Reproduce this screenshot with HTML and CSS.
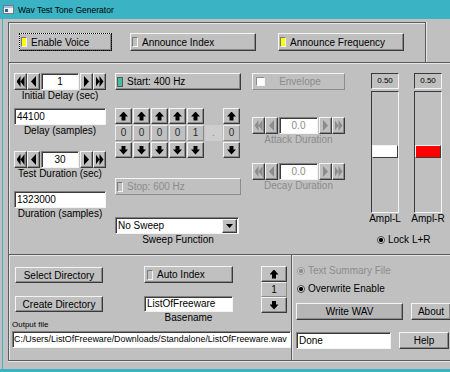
FILE: index.html
```html
<!DOCTYPE html>
<html>
  <head>
    <meta charset="UTF-8" />
    <title>Wav Test Tone Generator</title>
    <link rel="stylesheet" href="styles.css">
  </head>
  <body>
    <div class="window">
      <div class="titlebar">
        <svg class="app-icon" viewBox="0 0 11 9"><rect x="0.5" y="0.5" width="10" height="8" fill="#f2f2f2" stroke="#7a7a7a"/><rect x="1" y="1" width="9" height="2" fill="#a9c0dc"/><rect x="2" y="4" width="3" height="3" fill="#2d5fa8"/></svg>
        <span>Wav Test Tone Generator</span>
      </div>

      <div class="client">
        <!-- voice options -->
        <div class="voice-strip">
          <div class="voice-frame">
            <button class="btn lead focus voice-btn"><i class="led yellow"></i>Enable Voice</button>
            <button class="btn lead announce-btn index-btn"><i class="led"></i>Announce Index</button>
            <button class="btn lead announce-btn freq-btn"><i class="led yellow"></i>Announce Frequency</button>
          </div>
        </div>

        <div class="main-frame">
          <!-- delays and durations -->
          <div class="col col-delay">
            <div class="spin">
              <button class="btn sbtn"><i class="ar first"></i></button>
              <button class="btn sbtn"><i class="ar prev"></i></button>
              <div class="entry center">1</div>
              <button class="btn sbtn"><i class="ar next"></i></button>
              <button class="btn sbtn"><i class="ar last"></i></button>
            </div>
            <div class="cap">Initial Delay (sec)</div>
            <div class="entry delay-samples">44100</div>
            <div class="cap">Delay (samples)</div>
            <div class="spin test-dur">
              <button class="btn sbtn"><i class="ar first"></i></button>
              <button class="btn sbtn"><i class="ar prev"></i></button>
              <div class="entry center">30</div>
              <button class="btn sbtn"><i class="ar next"></i></button>
              <button class="btn sbtn"><i class="ar last"></i></button>
            </div>
            <div class="cap">Test Duration (sec)</div>
            <div class="entry dur-samples">1323000</div>
            <div class="cap">Duration (samples)</div>
          </div>

          <!-- frequency -->
          <div class="col col-freq">
            <button class="btn lead"><i class="led green"></i>Start: 400 Hz</button>
            <div class="digits">
              <button class="btn dbtn"><i class="ar up"></i></button>
              <button class="btn dbtn"><i class="ar up"></i></button>
              <button class="btn dbtn"><i class="ar up"></i></button>
              <button class="btn dbtn"><i class="ar up"></i></button>
              <button class="btn dbtn"><i class="ar up"></i></button>
              <div></div>
              <button class="btn dbtn"><i class="ar up"></i></button>

              <div class="dval">0</div>
              <div class="dval">0</div>
              <div class="dval">0</div>
              <div class="dval">0</div>
              <div class="dval">1</div>
              <div class="dval dot">.</div>
              <div class="dval">0</div>

              <button class="btn dbtn"><i class="ar down"></i></button>
              <button class="btn dbtn"><i class="ar down"></i></button>
              <button class="btn dbtn"><i class="ar down"></i></button>
              <button class="btn dbtn"><i class="ar down"></i></button>
              <button class="btn dbtn"><i class="ar down"></i></button>
              <div></div>
              <button class="btn dbtn"><i class="ar down"></i></button>
            </div>
            <button class="btn lead dim stop-btn"><i class="led"></i>Stop: 600 Hz</button>
            <div class="combo">
              <span class="combo-text">No Sweep</span>
              <button class="btn combo-btn"><i class="ar drop"></i></button>
            </div>
            <div class="cap">Sweep Function</div>
          </div>

          <!-- envelope -->
          <div class="col col-env">
            <button class="btn dim env-btn"><i class="check"></i><span class="env-text">Envelope</span></button>
            <div class="spin dim attack">
              <button class="btn sbtn"><i class="ar first"></i></button>
              <button class="btn sbtn"><i class="ar prev"></i></button>
              <div class="entry center">0.0</div>
              <button class="btn sbtn"><i class="ar next"></i></button>
              <button class="btn sbtn"><i class="ar last"></i></button>
            </div>
            <div class="cap dim">Attack Duration</div>
            <div class="spin dim decay">
              <button class="btn sbtn"><i class="ar first"></i></button>
              <button class="btn sbtn"><i class="ar prev"></i></button>
              <div class="entry center">0.0</div>
              <button class="btn sbtn"><i class="ar next"></i></button>
              <button class="btn sbtn"><i class="ar last"></i></button>
            </div>
            <div class="cap dim">Decay Duration</div>
          </div>

          <!-- amplitude sliders -->
          <div class="col col-ampl">
            <div class="sliders">
              <div class="slider">
                <div class="val">0.50</div>
                <div class="trough"><div class="handle"></div></div>
                <div class="cap">Ampl-L</div>
              </div>
              <div class="slider">
                <div class="val">0.50</div>
                <div class="trough"><div class="handle red"></div></div>
                <div class="cap">Ampl-R</div>
              </div>
            </div>
            <div class="opt lock"><i class="radio"></i>Lock L+R</div>
          </div>
        </div>

        <div class="bottom-row">
          <!-- output file -->
          <div class="file-frame">
            <div class="file-top">
              <div class="dir-col">
                <button class="btn">Select Directory</button>
                <button class="btn create-btn">Create Directory</button>
                <div class="small-label">Output file</div>
              </div>
              <div class="base-col">
                <button class="btn lead auto-btn"><i class="led"></i>Auto Index</button>
                <div class="entry base-entry">ListOfFreeware</div>
                <div class="cap">Basename</div>
              </div>
              <div class="index-col">
                <button class="btn ibtn"><i class="ar up"></i></button>
                <div class="ival">1</div>
                <button class="btn ibtn"><i class="ar down"></i></button>
              </div>
            </div>
            <div class="entry path">C:/Users/ListOfFreeware/Downloads/Standalone/ListOfFreeware.wav</div>
          </div>

          <!-- write -->
          <div class="write-frame">
            <div class="opt dim"><i class="radio"></i>Text Summary File</div>
            <div class="opt overwrite"><i class="radio"></i>Overwrite Enable</div>
            <div class="write-row">
              <button class="btn write-btn">Write WAV</button>
              <button class="btn about-btn">About</button>
            </div>
            <div class="write-row status-row">
              <div class="entry status">Done</div>
              <button class="btn help-btn">Help</button>
            </div>
          </div>
        </div>
      </div>
      <div class="edge"></div>
    </div>
  </body>
</html>
```

FILE: styles.css
```css
* {
    box-sizing: border-box;
}

body {
    margin: 0;
    font-family: "Liberation Sans", Arial, sans-serif;
    font-size: 10px;
    color: #000;
}

.window {
    width: 450px;
    height: 372px;
    overflow: hidden;
    background: #c0c0c0;
}

.titlebar {
    height: 19px;
    background: #3ab3c4;
    display: flex;
    align-items: center;
    padding-left: 3px;
    font-size: 8.5px;
}

.app-icon {
    width: 11px;
    height: 9px;
    margin-right: 4px;
}

.client {
    margin-left: 2px;
    border-left: 1px solid #3ab3c4;
    height: 350px;
}

.edge {
    height: 3px;
    background: #3ab3c4;
}

/* generic widgets */
.btn {
    font: inherit;
    color: #000;
    background: #c0c0c0;
    height: 17px;
    padding: 0 1px;
    margin: 0;
    border: 1px solid;
    border-color: #f4f4f4 #3a3a3a #3a3a3a #f4f4f4;
    box-shadow: inset -1px -1px #8a8a8a;
    display: flex;
    align-items: center;
    justify-content: center;
    flex: none;
    white-space: nowrap;
}

.btn.lead {
    justify-content: flex-start;
}

.btn.dim {
    color: #8c8c8c;
    border-color: #f4f4f4 #8c8c8c #8c8c8c #f4f4f4;
    box-shadow: none;
}

.focus {
    outline: 1px dotted #000;
    outline-offset: -1px;
}

.led {
    width: 6px;
    height: 10px;
    margin-right: 4px;
    border: 1px solid;
    border-color: #7a7a7a #f4f4f4 #f4f4f4 #7a7a7a;
    flex: none;
}

.led.yellow {
    background: #ffff00;
}

.led.green {
    background: #3cbf9c;
    border-color: #5a5a5a;
}

.entry {
    height: 17px;
    background: #fff;
    border: 1px solid;
    border-color: #808080 #f4f4f4 #f4f4f4 #808080;
    box-shadow: inset 1px 1px #3a3a3a;
    padding-left: 2px;
    line-height: 15px;
    white-space: nowrap;
    overflow: hidden;
}

.entry.center {
    text-align: center;
    padding-left: 0;
}

.cap {
    line-height: 12px;
    text-align: center;
    white-space: nowrap;
}

.dim .entry,
.cap.dim {
    color: #8c8c8c;
}

/* arrow glyphs */
.ar {
    display: block;
    background: #000;
}

.dim .ar {
    background: #8c8c8c;
}

.ar.up {
    width: 9px;
    height: 9px;
    clip-path: polygon(50% 0, 100% 55%, 72% 55%, 72% 100%, 28% 100%, 28% 55%, 0 55%);
}

.ar.down {
    width: 9px;
    height: 9px;
    clip-path: polygon(28% 0, 72% 0, 72% 45%, 100% 45%, 50% 100%, 0 45%, 28% 45%);
}

.ar.first {
    width: 8px;
    height: 11px;
    clip-path: polygon(0 50%, 50% 0, 50% 50%, 100% 0, 100% 100%, 50% 50%, 50% 100%);
}

.ar.prev {
    width: 5px;
    height: 11px;
    clip-path: polygon(0 50%, 100% 0, 100% 100%);
}

.ar.next {
    width: 5px;
    height: 11px;
    clip-path: polygon(0 0, 100% 50%, 0 100%);
}

.ar.last {
    width: 8px;
    height: 11px;
    clip-path: polygon(0 0, 50% 50%, 50% 0, 100% 50%, 50% 100%, 50% 50%, 0 100%);
}

.ar.drop {
    width: 7px;
    height: 4px;
    clip-path: polygon(0 0, 100% 0, 50% 100%);
}

/* top voice frame */
.voice-strip {
    height: 43px;
    display: flex;
}

.voice-frame {
    margin: 3px 0 0 5px;
    width: 418px;
    height: 40px;
    border: 1px solid #5c5c5c;
    border-bottom: none;
    box-shadow: inset 1px 1px #e6e6e6, 1px 0 #e6e6e6;
    padding: 10px 0 0 10px;
    display: flex;
}

.voice-frame .btn {
    height: 18px;
}

.voice-btn {
    width: 93px;
}

.announce-btn {
    width: 126px;
}

.index-btn {
    margin-left: 18px;
}

.freq-btn {
    margin-left: 22px;
}

/* main frame */
.main-frame {
    margin-left: 5px;
    height: 192px;
    border-top: 1px solid #5c5c5c;
    border-left: 1px solid #5c5c5c;
    box-shadow: inset 1px 1px #e6e6e6;
    padding: 10px 0 0 5px;
    display: flex;
    align-items: flex-start;
}

.col {
    display: flex;
    flex-direction: column;
}

.col-delay {
    width: 92px;
}

.spin {
    display: flex;
    height: 17px;
}

.sbtn {
    width: 13px;
    padding: 0;
}

.spin .entry {
    width: 38px;
    margin: 0 1px;
}

.delay-samples {
    margin-top: 6px;
}

.test-dur {
    margin-top: 14px;
}

.dur-samples {
    margin-top: 11px;
}

.col-freq {
    width: 126px;
    margin-left: 9px;
}

.digits {
    margin-top: 18px;
    display: grid;
    grid-template-columns: repeat(7, 17px);
    grid-template-rows: repeat(3, 16px);
    gap: 1px;
}

.dbtn {
    width: 17px;
    height: 16px;
    padding: 0;
}

.dval {
    border: 1px solid;
    border-color: #ececec #8a8a8a #8a8a8a #ececec;
    text-align: center;
    line-height: 14px;
    color: #2a2a2a;
}

.dval.dot {
    border: none;
    background: #cdcdcd;
    color: #8c8c8c;
    line-height: 16px;
}

.stop-btn {
    margin-top: 20px;
}

.combo {
    margin-top: 22px;
    height: 17px;
    width: 124px;
    display: flex;
    background: #fff;
    border: 1px solid;
    border-color: #808080 #f4f4f4 #f4f4f4 #808080;
    box-shadow: inset 1px 1px #3a3a3a;
    padding: 1px 1px 0 1px;
}

.combo-text {
    flex: 1;
    line-height: 14px;
    padding-left: 1px;
}

.combo-btn {
    width: 15px;
    height: 14px;
    padding: 0;
}

.col-env {
    width: 93px;
    margin-left: 11px;
}

.env-btn {
    justify-content: flex-start;
    padding-left: 3px;
}

.check {
    width: 9px;
    height: 9px;
    background: #fff;
    border: 1px solid;
    border-color: #8c8c8c #f4f4f4 #f4f4f4 #8c8c8c;
    flex: none;
}

.env-text {
    flex: 1;
    text-align: center;
    padding-right: 8px;
}

.spin.attack {
    margin-top: 27px;
}

.spin.decay {
    margin-top: 17px;
}

.col-env .spin .entry {
    width: 39px;
}

.col-ampl {
    width: 71px;
    margin-left: 26px;
}

.sliders {
    display: flex;
    gap: 15px;
}

.slider {
    width: 28px;
    display: flex;
    flex-direction: column;
    align-items: center;
}

.val {
    width: 28px;
    height: 16px;
    border: 1px solid;
    border-color: #3a3a3a #f4f4f4 #f4f4f4 #3a3a3a;
    font-size: 8px;
    line-height: 14px;
    text-align: center;
}

.trough {
    margin-top: 2px;
    width: 28px;
    height: 122px;
    border: 1px solid;
    border-color: #3a3a3a #f4f4f4 #f4f4f4 #3a3a3a;
}

.handle {
    margin-top: 53px;
    height: 13px;
    background: #fff;
    border: 1px solid;
    border-color: #f4f4f4 #3a3a3a #3a3a3a #f4f4f4;
}

.handle.red {
    background: #ff0000;
}

.opt {
    display: flex;
    align-items: center;
    line-height: 12px;
    white-space: nowrap;
}

.radio {
    width: 8px;
    height: 8px;
    margin-right: 3px;
    border-radius: 50%;
    border: 1px solid #4a4a4a;
    background: radial-gradient(circle, #000 0 1.8px, #dcdcdc 2.4px);
    flex: none;
}

.opt.dim {
    color: #8c8c8c;
}

.opt.dim .radio {
    border-color: #9a9a9a;
    background: radial-gradient(circle, #8c8c8c 0 1.8px, #d4d4d4 2.4px);
}

.lock {
    margin: 9px 0 0 6px;
}

/* bottom frames */
.bottom-row {
    display: flex;
    height: 107px;
}

.file-frame {
    margin-left: 5px;
    width: 290px;
    border: 1px solid #5c5c5c;
    box-shadow: inset 1px 1px #e6e6e6, 0 1px #e6e6e6;
    padding: 12px 0 0 6px;
}

.file-top {
    display: flex;
    align-items: flex-start;
}

.dir-col {
    width: 88px;
    display: flex;
    flex-direction: column;
}

.dir-col .btn {
    height: 16px;
    width: 88px;
}

.create-btn {
    margin-top: 13px;
}

.small-label {
    margin: 8px 0 0 -3px;
    font-size: 8px;
    line-height: 10px;
    white-space: nowrap;
}

.base-col {
    width: 89px;
    margin: -1px 0 0 41px;
    display: flex;
    flex-direction: column;
}

.auto-btn {
    padding-left: 2px;
}

.base-entry {
    margin-top: 13px;
    height: 16px;
    line-height: 14px;
}

.index-col {
    width: 26px;
    margin: -1px 0 0 28px;
    display: flex;
    flex-direction: column;
}

.ibtn {
    width: 26px;
    height: 16px;
}

.ival {
    height: 15px;
    border: 1px solid;
    border-color: #ececec #8a8a8a #8a8a8a #ececec;
    text-align: center;
    line-height: 13px;
}

.entry.path {
    margin: 1px 0 0 -3px;
    width: 279px;
    font-size: 8.9px;
    padding-left: 1px;
}

.write-frame {
    flex: 1;
    border-top: 1px solid #5c5c5c;
    border-bottom: 1px solid #5c5c5c;
    box-shadow: inset 1px 1px #e6e6e6, 0 1px #e6e6e6;
    padding: 10px 0 0 4px;
}

.write-frame .opt {
    margin-left: 1px;
}

.overwrite {
    margin-top: 6px;
}

.write-row {
    display: flex;
    margin-top: 8px;
}

.write-btn {
    width: 107px;
    background: #b6b6b6;
}

.about-btn {
    width: 40px;
    margin-left: 8px;
}

.status-row {
    margin-top: 12px;
}

.entry.status {
    width: 95px;
}

.help-btn {
    width: 50px;
    margin-left: 8px;
}
```
